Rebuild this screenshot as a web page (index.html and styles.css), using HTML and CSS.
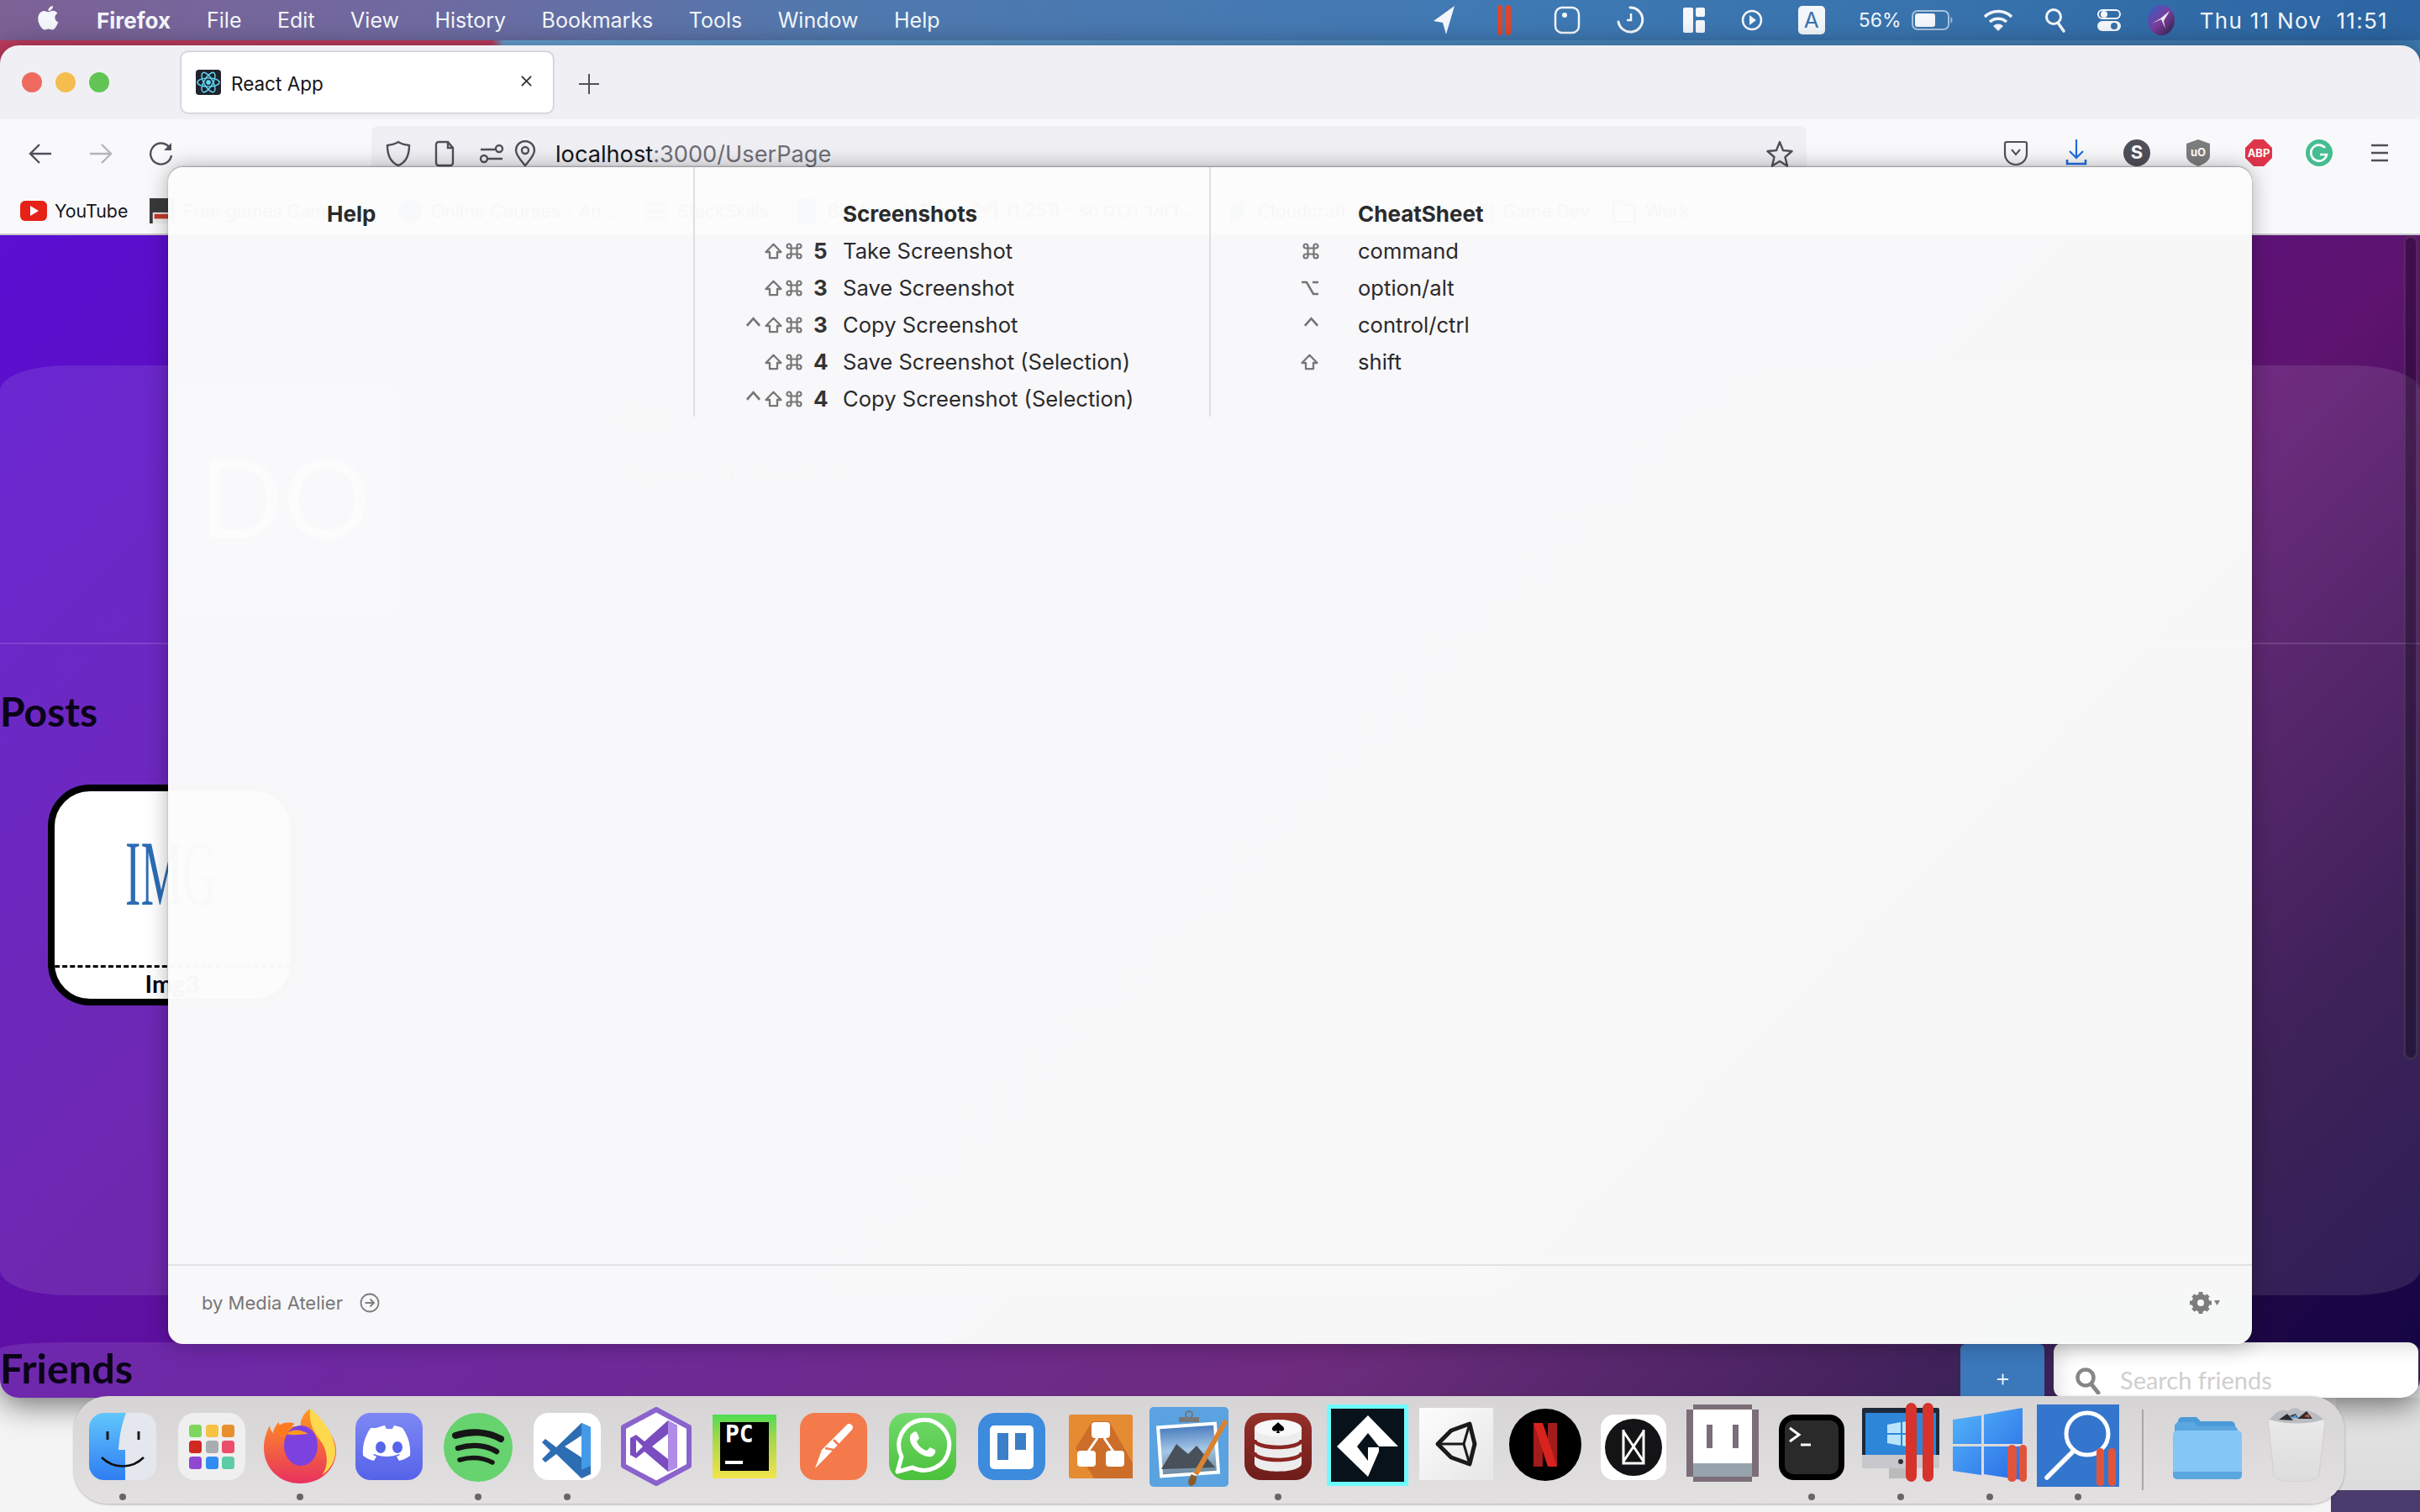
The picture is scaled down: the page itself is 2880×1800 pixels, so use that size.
FILE: index.html
```html
<!DOCTYPE html>
<html lang="en">
<head>
<meta charset="utf-8">
<title>React App</title>
<link rel="stylesheet" href="styles.css">
</head>
<body>
<svg class="defs" width="0" height="0">
  <symbol id="k-shift" viewBox="0 0 22 20"><path d="M11 1.800 20 11h-4.500v7.200h-9V11H2z" fill="none" stroke="#767676" stroke-width="2.300" stroke-linejoin="round"/></symbol>
  <symbol id="k-cmd" viewBox="0 0 20 20"><path d="M6.500 6.500V4A2.500 2.500 0 1 0 4 6.500H16A2.500 2.500 0 1 0 13.500 4V16A2.500 2.500 0 1 0 16 13.500H4A2.500 2.500 0 1 0 6.500 16z" fill="none" stroke="#767676" stroke-width="2.200"/></symbol>
  <symbol id="k-ctrl" viewBox="0 0 20 12"><path d="M2 11 10 2l8 9" fill="none" stroke="#767676" stroke-width="2.800"/></symbol>
  <symbol id="k-opt" viewBox="0 0 22 18"><path d="M1 2h6l8 14h6M14 2h7" fill="none" stroke="#767676" stroke-width="2.600"/></symbol>
</svg>
<header class="menubar">
  <svg class="apple" viewBox="0 0 26 32"><path d="M19 1c.3 3-2.500 6.200-5.600 6 -.4-2.900 2.600-5.800 5.600-6zM13.300 8.300c1.300 0 3-1.500 5.600-1.500 2 0 4.200 1 5.500 3-4.500 2.700-3.700 8.800.9 10.700-1.300 3.300-4 9-7 9-1.500 0-2.400-1-4.400-1-2.100 0-3 1-4.500 1C6 29.500 1.300 22.600 1.300 16.300c0-5.700 3.500-9.300 7.300-9.300 2 0 3.500 1.300 4.700 1.300z"/></svg>
  <nav class="menus">
    <b class="app">Firefox</b><span>File</span><span>Edit</span><span>View</span><span>History</span><span>Bookmarks</span><span>Tools</span><span>Window</span><span>Help</span>
  </nav>
  <div class="status">
    <svg class="st st-loc" viewBox="0 0 30 36"><path d="M28 1 3 19l11 2 4 14z" fill="#f4f7fb"/></svg>
    <svg class="st st-pause" viewBox="0 0 18 36"><rect x="1" width="6" height="36" rx="3" fill="#e2452c"/><rect x="11" width="6" height="36" rx="3" fill="#e2452c"/></svg>
    <svg class="st st-mouse" viewBox="0 0 32 34"><rect x="2" y="2" width="28" height="30" rx="8" fill="none" stroke="#f4f7fb" stroke-width="2.500"/><circle cx="13" cy="11" r="3" fill="#f4f7fb"/></svg>
    <svg class="st st-clock" viewBox="0 0 34 36"><path d="M17 3A14.500 14.500 0 1 1 3 20" fill="none" stroke="#f4f7fb" stroke-width="3" stroke-linecap="round"/><path d="M13 18h5V10" fill="none" stroke="#f4f7fb" stroke-width="2.500"/></svg>
    <svg class="st st-layout" viewBox="0 0 28 32"><rect x="1" y="1" width="12" height="30" rx="2" fill="#f4f7fb"/><rect x="16" y="1" width="11" height="11" rx="2" fill="#f4f7fb"/><rect x="16" y="16" width="11" height="15" rx="2" fill="#f4f7fb"/></svg>
    <svg class="st st-play" viewBox="0 0 26 28"><circle cx="13" cy="14" r="11" fill="none" stroke="#f4f7fb" stroke-width="2.500"/><path d="M10 8l8 6-8 6z" fill="#f4f7fb"/></svg>
    <span class="st st-a">A</span>
    <span class="st st-pct">56%</span>
    <svg class="st st-batt" viewBox="0 0 50 24"><rect x="1" y="1" width="43" height="22" rx="6" fill="none" stroke="#a8c2dc" stroke-width="2"/><rect x="4" y="4" width="24" height="16" rx="3" fill="#f4f7fb"/><path d="M46.500 8a5 5 0 0 1 0 8z" fill="#a8c2dc"/></svg>
    <svg class="st st-wifi" viewBox="0 0 36 26"><path d="M2 9a23 23 0 0 1 32 0M8 15a15 15 0 0 1 20 0" fill="none" stroke="#f4f7fb" stroke-width="3.500"/><path d="M18 26l-6-6a8.500 8.500 0 0 1 12 0z" fill="#f4f7fb"/></svg>
    <svg class="st st-search" viewBox="0 0 26 30"><circle cx="11" cy="11" r="8.500" fill="none" stroke="#f4f7fb" stroke-width="3"/><path d="M16 18l7 10" stroke="#f4f7fb" stroke-width="3.500" stroke-linecap="round"/></svg>
    <svg class="st st-cc" viewBox="0 0 30 28"><rect x="2" y="2" width="26" height="10" rx="5" fill="none" stroke="#f4f7fb" stroke-width="2"/><circle cx="9" cy="7" r="4" fill="#f4f7fb"/><rect x="1" y="15" width="28" height="12" rx="6" fill="#f4f7fb"/><circle cx="21" cy="21" r="4" fill="#3a72ac"/></svg>
    <svg class="st st-siri" viewBox="0 0 32 36"><defs><linearGradient id="siri" x1="0" y1="0" x2="1" y2="1"><stop offset="0" stop-color="#2d63c4"/><stop offset=".5" stop-color="#7b3d9e"/><stop offset="1" stop-color="#2a2340"/></linearGradient></defs><ellipse cx="16" cy="18" rx="16" ry="18" fill="url(#siri)"/><path d="M5 22 15 16l11-9-7 12 2 9-5-11z" fill="#e8eaf2"/></svg>
    <time class="clock">Thu 11 Nov&nbsp; 11:51</time>
  </div>
</header>
<div class="strip"></div>

<main class="window">
  <section class="tabbar">
    <div class="lights"><i class="red"></i><i class="yellow"></i><i class="green"></i></div>
    <div class="tab">
      <svg class="favicon" viewBox="0 0 32 32"><rect width="32" height="32" rx="4" fill="#20232a"/><g fill="none" stroke="#61dafb" stroke-width="1.500"><ellipse cx="16" cy="16" rx="14" ry="5.500"/><ellipse cx="16" cy="16" rx="14" ry="5.500" transform="rotate(60 16 16)"/><ellipse cx="16" cy="16" rx="14" ry="5.500" transform="rotate(120 16 16)"/></g><circle cx="16" cy="16" r="3" fill="#61dafb"/></svg>
      <span class="tab-title">React App</span>
      <svg class="tab-close" viewBox="0 0 16 16"><path d="M2 2l12 12M14 2 2 14" stroke="#2b2a33" stroke-width="1.800"/></svg>
    </div>
    <svg class="newtab" viewBox="0 0 26 26"><path d="M13 1v24M1 13h24" stroke="#50505a" stroke-width="2"/></svg>
  </section>

  <section class="toolbar">
    <svg class="nav" viewBox="0 0 30 30"><path d="M28 15H3M14 4 3 15l11 11" fill="none" stroke="#50505a" stroke-width="2.400"/></svg>
    <svg class="nav" viewBox="0 0 30 30"><path d="M2 15h25M16 4l11 11-11 11" fill="none" stroke="#b4b4bb" stroke-width="2.400"/></svg>
    <svg class="nav" viewBox="0 0 30 30"><path d="M25 8A12.500 12.500 0 1 0 27 17" fill="none" stroke="#50505a" stroke-width="2.400"/><path d="M27 2v9h-9z" fill="#50505a"/></svg>
    <div class="urlbar">
      <svg class="ub ub-shield" viewBox="0 0 30 32"><path d="M15 2c4 2.500 8 3.500 13 4 0 11-3 20-13 24C5 26 2 17 2 6c5-.5 9-1.500 13-4z" fill="none" stroke="#50505a" stroke-width="2.400"/></svg>
      <svg class="ub ub-page" viewBox="0 0 26 32"><path d="M3 5a3 3 0 0 1 3-3h11l6 7v18a3 3 0 0 1-3 3H6a3 3 0 0 1-3-3zM17 2v7h6" fill="none" stroke="#50505a" stroke-width="2.400"/></svg>
      <svg class="ub ub-perm" viewBox="0 0 30 26"><path d="M2 8h17M11 19h17" stroke="#50505a" stroke-width="2.400"/><circle cx="24" cy="7" r="4" fill="none" stroke="#50505a" stroke-width="2.400"/><circle cx="6" cy="19" r="4" fill="none" stroke="#50505a" stroke-width="2.400"/></svg>
      <svg class="ub ub-pin" viewBox="0 0 28 32"><path d="M14 30C9 24 3 18 3 12a11 11 0 0 1 22 0c0 6-6 12-11 18z" fill="none" stroke="#50505a" stroke-width="2.400"/><circle cx="14" cy="12" r="4" fill="none" stroke="#50505a" stroke-width="2.400"/></svg>
      <span class="url">localhost<em>:3000/UserPage</em></span>
      <svg class="ub ub-star" viewBox="0 0 32 32"><path d="M16 2l4 10 10.500 1-8 7 2.500 10.500L16 25l-9 5.500L9.500 20l-8-7L12 12z" fill="none" stroke="#50505a" stroke-width="2.400" stroke-linejoin="round"/></svg>
    </div>
    <div class="addons">
      <svg viewBox="0 0 32 32"><path d="M5 3h22a2 2 0 0 1 2 2v12a13 13 0 0 1-26 0V5a2 2 0 0 1 2-2z" fill="none" stroke="#50505a" stroke-width="2.200"/><path d="M11 12l5 6 5-6" fill="none" stroke="#50505a" stroke-width="2"/></svg>
      <svg viewBox="0 0 32 32"><path d="M16 0v22M8 14l8 8 8-8" fill="none" stroke="#1f6ce0" stroke-width="2.200"/><path d="M5 24v5h22v-5" fill="none" stroke="#1f6ce0" stroke-width="2.600"/></svg>
      <svg viewBox="0 0 32 32"><circle cx="16" cy="16" r="16" fill="#50505c"/><text x="16" y="23" class="ic-s">S</text></svg>
      <svg viewBox="0 0 32 32"><path d="M16 0l14 5v14c0 6-6 10-14 13C8 29 2 25 2 19V5z" fill="#7d7d7d"/><text x="16" y="20" class="ic-ub">uO</text></svg>
      <svg viewBox="0 0 32 32"><path d="M10 0h12l10 10v12L22 32H10L0 22V10z" fill="#e0344a"/><text x="16" y="21" class="ic-abp">ABP</text></svg>
      <svg viewBox="0 0 32 32"><circle cx="16" cy="16" r="16" fill="#45bd91"/><path d="M23 10a9.500 9.500 0 1 0 2 8h-8" fill="none" stroke="#fff" stroke-width="2.600"/></svg>
      <svg viewBox="0 0 32 32"><path d="M6 7h20M6 16h20M6 25h20" stroke="#50505a" stroke-width="2.600"/></svg>
    </div>
  </section>

  <section class="bookmarks">
    <span class="bm bm-yt"><svg viewBox="0 0 32 24"><rect width="32" height="24" rx="6" fill="#e62117"/><path d="M12 6l10 6-10 6z" fill="#fff"/></svg>YouTube</span>
    <span class="bm bm-free"><svg viewBox="0 0 32 32"><rect width="32" height="32" fill="#3a3a3a"/><rect x="4" y="18" width="24" height="14" fill="#eee"/><rect x="6" y="20" width="20" height="6" fill="#c0392b"/></svg>Free games Gam...</span>
    <span class="bm bm-online"><svg viewBox="0 0 30 30"><circle cx="15" cy="15" r="14" fill="#4c6ef5"/></svg>Online Courses - An...</span>
    <span class="bm bm-stack"><svg viewBox="0 0 30 30"><path d="M2 6h26M2 15h26M2 24h26" stroke="#777" stroke-width="5"/></svg>StackSkills</span>
    <span class="bm bm-book"><svg viewBox="0 0 24 32"><rect width="24" height="32" rx="3" fill="#4c6ef5"/></svg>Bookmark Tab</span>
    <span class="bm bm-mail"><svg viewBox="0 0 30 30"><path d="M2 26V4l13 11L28 4v22" fill="none" stroke="#d93025" stroke-width="4"/></svg><bdi dir="ltr">(1,251) - sc דואר נכנס...</bdi></span>
    <span class="bm bm-cloud"><svg viewBox="0 0 20 30"><path d="M2 28V8L18 2v20z" fill="#4aa564"/></svg>Cloudcraft - Dra</span>
    <span class="bm bm-dev"><svg viewBox="0 0 30 30"><path d="M2 4h10l4 4h12v20H2z" fill="none" stroke="#50505a" stroke-width="2"/></svg>Game Dev</span>
    <span class="bm bm-work"><svg viewBox="0 0 30 30"><path d="M2 4h10l4 4h12v20H2z" fill="none" stroke="#50505a" stroke-width="2"/></svg>Work</span>
  </section>

  <section class="page">
    <div class="scroll-thumb"></div>
    <div class="panel">
      <div class="profile">
        <div class="avatar">DO</div>
        <div class="who">
          <h1>dor</h1>
          <p>Number of friends: 0</p>
        </div>
      </div>
      <h2 class="posts-title">Posts</h2>
      <article class="post">
        <div class="post-img"><svg viewBox="0 0 112 76"><text x="2" y="74" textLength="108" lengthAdjust="spacingAndGlyphs" class="img-word">IMG</text></svg></div>
        <div class="post-cap">Img3</div>
      </article>
    </div>
    <div class="friends">
      <h2>Friends</h2>
      <div class="add"><svg viewBox="0 0 16 16"><path d="M8 1v14M1 8h14" stroke="#f0f4fa" stroke-width="2"/></svg></div>
      <label class="find">
        <svg viewBox="0 0 30 32"><circle cx="12" cy="12" r="9.500" fill="none" stroke="#868686" stroke-width="4.500"/><path d="M19 20l8 10" stroke="#868686" stroke-width="5" stroke-linecap="round"/></svg>
        <span>Search friends</span>
      </label>
    </div>
  </section>
</main>

<section class="overlay">
  <div class="sheet">
    <div class="col col-help"><h3>Help</h3></div>
    <div class="col col-shots">
      <h3>Screenshots</h3>
      <div class="row"><kbd><svg class="k k-s"><use href="#k-shift"/></svg><svg class="k k-c"><use href="#k-cmd"/></svg><b>5</b></kbd><span>Take Screenshot</span></div>
      <div class="row"><kbd><svg class="k k-s"><use href="#k-shift"/></svg><svg class="k k-c"><use href="#k-cmd"/></svg><b>3</b></kbd><span>Save Screenshot</span></div>
      <div class="row"><kbd><svg class="k k-t"><use href="#k-ctrl"/></svg><svg class="k k-s"><use href="#k-shift"/></svg><svg class="k k-c"><use href="#k-cmd"/></svg><b>3</b></kbd><span>Copy Screenshot</span></div>
      <div class="row"><kbd><svg class="k k-s"><use href="#k-shift"/></svg><svg class="k k-c"><use href="#k-cmd"/></svg><b>4</b></kbd><span>Save Screenshot (Selection)</span></div>
      <div class="row"><kbd><svg class="k k-t"><use href="#k-ctrl"/></svg><svg class="k k-s"><use href="#k-shift"/></svg><svg class="k k-c"><use href="#k-cmd"/></svg><b>4</b></kbd><span>Copy Screenshot (Selection)</span></div>
    </div>
    <div class="col col-cheat">
      <h3>CheatSheet</h3>
      <div class="row"><kbd><svg class="k k-c"><use href="#k-cmd"/></svg></kbd><span>command</span></div>
      <div class="row"><kbd><svg class="k k-o"><use href="#k-opt"/></svg></kbd><span>option/alt</span></div>
      <div class="row"><kbd><svg class="k k-t"><use href="#k-ctrl"/></svg></kbd><span>control/ctrl</span></div>
      <div class="row"><kbd><svg class="k k-s"><use href="#k-shift"/></svg></kbd><span>shift</span></div>
    </div>
  </div>
  <footer class="sheet-foot">
    <span>by Media Atelier</span>
    <svg class="go" viewBox="0 0 24 24"><circle cx="12" cy="12" r="10.500" fill="none" stroke="#7d7d7d" stroke-width="1.800"/><path d="M6.500 12h10M12.500 7.500l4.500 4.500-4.500 4.500" fill="none" stroke="#7d7d7d" stroke-width="1.800"/></svg>
    <svg class="gear" viewBox="0 0 36 28"><g fill="#7d7d7d"><circle cx="13" cy="14" r="8" fill="none" stroke="#7d7d7d" stroke-width="5"/><g stroke="#7d7d7d" stroke-width="5"><path d="M13 1v26M0 14h26M4 5l18 18M22 5 4 23"/></g><circle cx="13" cy="14" r="4" fill="#f8f8fa"/><path d="M29 11h7l-3.500 6z"/></g></svg>
  </footer>
</section>

<nav class="dock">
  <div class="slot run"><svg class="ic80" viewBox="0 0 80 80"><defs><linearGradient id="fL" x1="0" y1="0" x2="0" y2="1"><stop offset="0" stop-color="#62c6fb"/><stop offset="1" stop-color="#2f7df2"/></linearGradient></defs><rect width="80" height="80" rx="18" fill="#e4e7ee"/><path d="M18 0h26c-5 13-8 27-9 44h8v36H18A18 18 0 0 1 0 62V18A18 18 0 0 1 18 0z" fill="url(#fL)"/><path d="M22 22v10M59 22v10" stroke="#1a1a1a" stroke-width="3"/><path d="M15 53c14 14 36 14 50 0" fill="none" stroke="#111" stroke-width="2.500"/></svg></div>
  <div class="slot"><svg class="ic80" viewBox="0 0 80 80"><rect width="80" height="80" rx="20" fill="#f0eff0"/><g><rect x="13" y="14" width="15" height="15" rx="3.500" fill="#7fd65d"/><rect x="33" y="14" width="15" height="15" rx="3.500" fill="#f6c244"/><rect x="52" y="14" width="15" height="15" rx="3.500" fill="#e88f2e"/><rect x="13" y="33" width="15" height="15" rx="3.500" fill="#d1281f"/><rect x="33" y="33" width="15" height="15" rx="3.500" fill="#a9adb0"/><rect x="52" y="33" width="15" height="15" rx="3.500" fill="#ea4e69"/><rect x="13" y="52" width="15" height="15" rx="3.500" fill="#9048d0"/><rect x="33" y="52" width="15" height="15" rx="3.500" fill="#2f8df2"/><rect x="52" y="52" width="15" height="15" rx="3.500" fill="#5dcba5"/></g></svg></div>
  <div class="slot run"><svg class="ic-fox" viewBox="0 0 86 90"><defs><linearGradient id="fx" x1="0" y1="0" x2="0" y2="1"><stop offset="0" stop-color="#ff9a1f"/><stop offset="1" stop-color="#e8315f"/></linearGradient></defs><path d="M43 89C18 89 0 70 0 47c0-10 3-20 7-27 0 4 2 7 4 9 1-6 5-12 7-13 0 4 2 8 5 9C30 18 38 22 44 22 42 15 48 4 55 0c0 10 9 15 14 24 3-1 6-1 7 0 5 8 10 16 10 26 0 22-18 39-43 39z" fill="url(#fx)"/><path d="M55 0c12 9 28 28 30 48 1 12-5 24-16 31 8-9 8-27-1-40C63 31 53 22 55 0z" fill="#ffd94d"/><path d="M11 27c5-8 15-13 26-9-6 3-8 7-9 9 6 0 12 2 16 8-5 3-13 0-15 2z" fill="#ff7a1f"/><ellipse cx="44" cy="44" rx="20" ry="24" fill="#7c42e0"/><path d="M27 30c6-6 16-6 26 0-8 0-17 3-26 0z" fill="#ff9a1f"/></svg></div>
  <div class="slot"><svg class="ic80" viewBox="0 0 80 80"><defs><linearGradient id="dc" x1="0" y1="0" x2="0" y2="1"><stop offset="0" stop-color="#7e88f5"/><stop offset="1" stop-color="#5563e8"/></linearGradient></defs><rect width="80" height="80" rx="18" fill="url(#dc)"/><path d="M25 18c5-2 9-3 10-3l2 4h7l2-4c3 .5 7 1.500 10 3 7 10 10 21 9 33-4 3-8 5-13 6l-3-5 4-2-1-1c-10 4-20 4-30 0l-1 1 4 2-3 5c-5-1-9-3-13-6-1-12 2-23 9-33z" fill="#fff"/><ellipse cx="30" cy="41" rx="6" ry="7" fill="#5865ea"/><ellipse cx="50" cy="41" rx="6" ry="7" fill="#5865ea"/></svg></div>
  <div class="slot run"><svg class="ic82" viewBox="0 0 82 82"><circle cx="41" cy="41" r="41" fill="#66d36e"/><g fill="none" stroke="#161616" stroke-linecap="round"><path d="M14 27c18-6 38-5 54 4" stroke-width="8"/><path d="M17 42c16-5 33-4 46 4" stroke-width="6.500"/><path d="M19 56c14-4 27-3 39 3" stroke-width="5.500"/></g></svg></div>
  <div class="slot run"><svg class="ic80" viewBox="0 0 80 80"><rect width="80" height="80" rx="18" fill="#fff"/><path d="M57 12 27 41 14 31l-4 4 10 10-10 10 4 4 13-10 30 29 11-5V17z" fill="#2c6db3"/><path d="M57 12l11 5v46l-11 5z" fill="#429ae8"/><path d="M57 27v26L37 40z" fill="#fff"/></svg></div>
  <div class="slot"><svg class="ic-vs" viewBox="0 0 86 94"><path d="M43 3 82 24v46L43 91 4 70V24z" fill="#fff" stroke="#8a63cc" stroke-width="6" stroke-linejoin="round"/><path d="M57 16l11 6v50l-11 5-28-24-10 8-7-4V37l7-4 10 8z" fill="#7a4cc0"/><path d="M57 16l11 6v50l-11 5z" fill="#b08be8"/><path d="M57 32v30L38 47z" fill="#fff"/><path d="M19 39v16l8-8z" fill="#fff"/></svg></div>
  <div class="slot"><svg class="ic-pc" viewBox="0 0 76 76"><defs><linearGradient id="pc" x1="0" y1="0" x2="0" y2="1"><stop offset="0" stop-color="#4fdc52"/><stop offset=".4" stop-color="#a9d74a"/><stop offset="1" stop-color="#f3e44b"/></linearGradient></defs><rect width="76" height="76" fill="url(#pc)"/><rect x="9" y="9" width="58" height="58" fill="#000"/><text x="15" y="33" class="ic-pc-txt">PC</text><rect x="15" y="55" width="21" height="4" fill="#fff"/></svg></div>
  <div class="slot"><svg class="ic80" viewBox="0 0 80 80"><rect width="80" height="80" rx="18" fill="#f47a4b"/><path d="M18 66 26 44 56 14c4-3 9 2 6 6L32 52z" fill="#fff"/><path d="M30 42l20 4M40 32l8 8" stroke="#f47a4b" stroke-width="2.500"/></svg></div>
  <div class="slot"><svg class="ic80" viewBox="0 0 80 80"><defs><linearGradient id="wa" x1="0" y1="0" x2="0" y2="1"><stop offset="0" stop-color="#72da6c"/><stop offset="1" stop-color="#4bc13b"/></linearGradient></defs><rect width="80" height="80" rx="20" fill="url(#wa)"/><path d="M10 70l5-18A30 30 0 1 1 28 65z" fill="none" stroke="#fff" stroke-width="5" stroke-linejoin="round"/><path d="M28 24c3-3 5-2 6 1l2 5-3 4c2 5 6 9 12 11l4-4 6 3c1 3-1 7-5 8-10 2-26-12-25-22 0-3 1-5 3-6z" fill="#fff"/></svg></div>
  <div class="slot"><svg class="ic80" viewBox="0 0 80 80"><rect width="80" height="80" rx="20" fill="#3c8bdc"/><rect x="14" y="15" width="52" height="52" rx="5" fill="#fff"/><rect x="23" y="24" width="13" height="32" fill="#3a7fc8"/><rect x="44" y="24" width="13" height="20" fill="#3a7fc8"/></svg></div>
  <div class="slot"><svg class="ic-dr" viewBox="0 0 76 76"><rect width="76" height="76" rx="3" fill="#e58c33"/><path d="M28 8h20l28 50v18H30L8 40z" fill="#cc6e2a"/><rect x="27" y="9" width="22" height="19" rx="4" fill="#fff"/><rect x="10" y="43" width="22" height="19" rx="4" fill="#fff"/><rect x="44" y="43" width="22" height="19" rx="4" fill="#fff"/><path d="M34 28 23 44M42 28 53 44" stroke="#fff" stroke-width="3"/></svg></div>
  <div class="slot"><svg class="ic-pv" viewBox="0 0 94 95"><defs><linearGradient id="pv" x1="0" y1="0" x2="0" y2="1"><stop offset="0" stop-color="#4d7fbf"/><stop offset=".5" stop-color="#a6c7e6"/><stop offset="1" stop-color="#6e8aa0"/></linearGradient></defs><rect width="94" height="95" rx="5" fill="#5aa2e0"/><rect x="10" y="20" width="72" height="62" fill="#fff" transform="rotate(-4 46 50)"/><rect x="14" y="24" width="64" height="54" fill="url(#pv)" transform="rotate(-4 46 50)"/><path d="M14 74 32 44l14 12 10-10 22 26z" fill="#48505a"/><rect x="35" y="12" width="24" height="6" fill="#777"/><circle cx="47" cy="9" r="4" fill="none" stroke="#777" stroke-width="2"/><path d="M91 16 55 80" stroke="#d98330" stroke-width="6"/><path d="M49 94c-4-2-4-6 1-14l6 3c0 7-2 10-7 11z" fill="#8a5c2c"/></svg></div>
  <div class="slot run"><svg class="ic80" viewBox="0 0 80 80"><defs><linearGradient id="sq" x1="0" y1="0" x2="0" y2="1"><stop offset="0" stop-color="#96302a"/><stop offset="1" stop-color="#6e1d1a"/></linearGradient></defs><rect width="80" height="80" rx="20" fill="url(#sq)"/><path d="M12 18v42c0 13 56 13 56 0V18z" fill="#ececec"/><ellipse cx="40" cy="18" rx="28" ry="10" fill="#f8f8f8"/><path d="M12 32c0 12 56 12 56 0M12 47c0 12 56 12 56 0" fill="none" stroke="#8a2622" stroke-width="4.500"/><path d="M40 11c3 4 8 5 7 9-1 2-4 2-6 1l1 3h-4l1-3c-2 1-5 1-6-1-1-4 4-5 7-9z" fill="#000"/></svg></div>
  <div class="slot"><svg class="ic-gm" viewBox="0 0 97 97"><rect width="97" height="97" fill="#6efbfd"/><rect x="5" y="5" width="87" height="87" fill="#07121a"/><path d="M49 13 85 50H62L49 34 36 50l13 17v-16h13v5L49 86 12 50z" fill="#fff"/></svg></div>
  <div class="slot"><svg class="ic-un" viewBox="0 0 88 86"><defs><linearGradient id="un" x1="0" y1="0" x2="1" y2="1"><stop offset="0" stop-color="#fdfdfd"/><stop offset="1" stop-color="#e6e6e6"/></linearGradient></defs><rect width="88" height="86" fill="url(#un)"/><path d="M22 43 38 27 60 19 66 43 60 67 38 59z" fill="none" stroke="#1b1b1b" stroke-width="5" stroke-linejoin="round"/><path d="M22 43H53L60 19M53 43 60 67" fill="none" stroke="#1b1b1b" stroke-width="3"/></svg></div>
  <div class="slot"><svg class="ic86" viewBox="0 0 86 86"><circle cx="43" cy="43" r="43" fill="#000"/><path d="M29 17h11v52H29zM46 17h11v52H46z" fill="#a11c1a"/><path d="M29 17h11l17 52H46z" fill="#d8231f"/></svg></div>
  <div class="slot"><svg class="ic78" viewBox="0 0 78 78"><rect width="78" height="78" rx="16" fill="#fff"/><circle cx="39" cy="39" r="34" fill="#141417"/><path d="M27 18v40h24V18M27 20 51 56M51 20 27 56" fill="none" stroke="#fff" stroke-width="3"/></svg></div>
  <div class="slot"><svg class="ic-px" viewBox="0 0 86 92"><path d="M8 0h70v6h8v80h-8v6H8v-6H0V6h8z" fill="#7b6e78"/><path d="M8 6h70v64H8z" fill="#fff"/><rect x="8" y="70" width="70" height="16" fill="#95a3ad"/><rect x="24" y="24" width="7" height="28" fill="#7b6e78"/><rect x="55" y="24" width="7" height="28" fill="#7b6e78"/></svg></div>
  <div class="slot run"><svg class="ic78" viewBox="0 0 78 78"><rect width="78" height="78" rx="18" fill="#000"/><rect x="7" y="7" width="64" height="64" rx="10" fill="#2a2a2a"/><path d="M13 16l11 8-11 8" fill="none" stroke="#fff" stroke-width="3"/><path d="M26 36h12" stroke="#fff" stroke-width="3"/></svg></div>
  <div class="slot run"><svg class="ic-mon" viewBox="0 0 92 94"><rect x="0" y="6" width="92" height="62" rx="2" fill="#1d2a3a"/><rect x="4" y="12" width="84" height="50" fill="#2e86d8"/><path d="M30 26l16-3v13H30zM48 23l14-3v16H48zM30 38h16v13l-16-3zM48 38h14v16l-14-3z" fill="#b8e4fb"/><rect y="62" width="92" height="16" fill="#c8c8cc"/><circle cx="46" cy="70" r="3" fill="#333"/><rect x="32" y="78" width="28" height="12" fill="#bbb"/><rect x="52" width="13" height="94" rx="6.500" fill="#d5332b"/><rect x="72" width="13" height="94" rx="6.500" fill="#d5332b"/></svg></div>
  <div class="slot run"><svg class="ic-win" viewBox="0 0 88 90"><defs><linearGradient id="wn" x1="0" y1="0" x2="1" y2="1"><stop offset="0" stop-color="#53b6f9"/><stop offset="1" stop-color="#2a6ae6"/></linearGradient></defs><path d="M0 16l34-5v34H0zM37 10l46-8v43H37zM0 48h34v34l-34-5zM37 48h46v40l-46-7z" fill="url(#wn)"/><rect x="65" y="46" width="11" height="44" rx="5.500" fill="#e2543a"/><rect x="79" y="46" width="9" height="44" rx="4.500" fill="#e2543a"/></svg></div>
  <div class="slot run"><svg class="ic-fd" viewBox="0 0 98 98"><rect width="98" height="98" fill="#3476ce"/><circle cx="60" cy="35" r="25" fill="none" stroke="#fff" stroke-width="5"/><path d="M44 55 12 87" stroke="#fff" stroke-width="5.500" stroke-linecap="round"/><rect x="71" y="52" width="9" height="45" rx="4.500" fill="#e2543a"/><rect x="85" y="52" width="9" height="45" rx="4.500" fill="#e2543a"/></svg></div>
  <div class="dock-sep"></div>
  <div class="slot"><svg class="ic-fo" viewBox="0 0 82 82"><path d="M6 12a5 5 0 0 1 5-5h17l5 5h36a5 5 0 0 1 5 5v30H6z" fill="#4b9bd8"/><path d="M2 18a5 5 0 0 1 5-5h18l5 5h42a5 5 0 0 1 5 5v30H2z" fill="#5aa6df"/><path d="M0 28a5 5 0 0 1 5-5h72a5 5 0 0 1 5 5v48a5 5 0 0 1-5 5H5a5 5 0 0 1-5-5z" fill="#84c6f5"/><path d="M0 72h82v4a5 5 0 0 1-5 5H5a5 5 0 0 1-5-5z" fill="#5aa6df"/></svg></div>
  <div class="slot"><svg class="ic-tr" viewBox="0 0 70 90"><defs><linearGradient id="tr" x1="0" y1="0" x2="0" y2="1"><stop offset="0" stop-color="#e9e9e9"/><stop offset="1" stop-color="#dcdcdc"/></linearGradient></defs><path d="M1 16h68l-7 66c-1 5-10 8-27 8S9 87 8 82z" fill="url(#tr)" stroke="#cfcfcf"/><path d="M3 16c6-8 14-14 22-10 4-5 12-5 16 0 9-3 20 3 26 10-20 6-44 6-64 0z" fill="#b9bcc0"/><path d="M14 16l10-7 7 8zM36 15l11-9 7 9zM26 12l8-3 3 5z" fill="#2b2b30"/><path d="M28 14l6-4 2 4z" fill="#4b9bd8"/><path d="M44 12l5-3 2 5z" fill="#c0543a"/></svg></div>
</nav>
</body>
</html>
```

FILE: styles.css
```css
* { box-sizing: border-box; }
html, body { margin: 0; padding: 0; }
body {
  position: relative;
  width: 2880px;
  height: 1800px;
  overflow: hidden;
  font-family: Inter, "Liberation Sans", sans-serif;
  background:
    linear-gradient(#4a3c6c, #4a3c6c) 2774px 1774px / 106px 26px no-repeat,
    linear-gradient(#e4e4e4, #dcdcdc) 2780px 1664px / 100px 110px no-repeat,
    #f4f4f4;
}
h1, h2, h3, p { margin: 0; }
svg { display: block; flex: none; }
.defs { position: absolute; }

/* menu bar */
.menubar {
  height: 48px;
  display: flex;
  align-items: center;
  padding-left: 44px;
  color: #f4f7fb;
  font-size: 25px;
  background: linear-gradient(90deg, #7c6195 0, #6f6aa0 500px, #5079ae 1000px, #3f79b4 1800px, #3873ad 2300px, #2c65a2 2880px);
}
.apple { width: 26px; height: 32px; fill: #f4f7fb; margin-top: -4px; }
.menus { display: flex; align-items: center; margin-left: 45px; }
.menus span, .menus b { margin-right: 42.500px; white-space: nowrap; }
.menus .app { font-weight: 700; font-size: 26px; margin-right: 43px; }
.status { margin-left: auto; display: flex; align-items: center; padding-right: 38px; }
.st-loc { width: 30px; height: 36px; }
.st-pause { width: 18px; height: 36px; margin-left: 48px; }
.st-mouse { width: 32px; height: 34px; margin-left: 50px; }
.st-clock { width: 34px; height: 36px; margin-left: 42px; }
.st-layout { width: 28px; height: 32px; margin-left: 45px; }
.st-play { width: 26px; height: 28px; margin-left: 42px; }
.st-a { width: 32px; height: 34px; margin-left: 42px; border-radius: 5px; background: #f4f7fb; color: #3a72ac; font-size: 26px; text-align: center; line-height: 34px; }
.st-pct { margin-left: 40px; font-size: 23px; }
.st-batt { width: 50px; height: 24px; margin-left: 12px; }
.st-wifi { width: 36px; height: 26px; margin-left: 35px; }
.st-search { width: 26px; height: 30px; margin-left: 37px; }
.st-cc { width: 30px; height: 28px; margin-left: 36px; }
.st-siri { width: 32px; height: 36px; margin-left: 31px; }
.clock { margin-left: 30px; white-space: nowrap; font-size: 26px; letter-spacing: 1.300px; }

.strip {
  height: 28px;
  margin-bottom: -22px;
  background: linear-gradient(90deg, #c23b5e 0, #c23b5e 585px, #6aa6d8 600px, #4d8cc4 1800px, #3f7cb4 2880px);
}

/* browser window */
.window {
  position: relative;
  height: 1610px;
  display: flex;
  flex-direction: column;
  border-radius: 22px;
  overflow: hidden;
  background: #f0f0f4;
  box-shadow: 0 8px 36px rgba(0, 0, 0, .55);
}
.tabbar { height: 88px; flex: none; display: flex; align-items: flex-start; position: relative; }
.lights { display: flex; gap: 16px; margin: 32px 0 0 26px; width: 190px; }
.lights i { width: 24px; height: 24px; border-radius: 50%; }
.lights .red { background: #ee6a5f; }
.lights .yellow { background: #f5bd4f; }
.lights .green { background: #61c454; }
.tab {
  width: 442px;
  height: 72px;
  margin-top: 8px;
  display: flex;
  align-items: center;
  padding: 0 24px 0 17px;
  background: #fff;
  border-radius: 8px;
  box-shadow: 0 0 3px rgba(0, 0, 0, .4);
  font-size: 22.500px;
  color: #15141a;
}
.favicon { width: 30px; height: 32px; }
.tab-title { margin-left: 12px; flex: 1; padding-top: 2px; }
.tab-close { width: 15px; height: 15px; margin-top: -4px; }
.newtab { width: 26px; height: 26px; margin: 33px 0 0 30px; }

.toolbar { height: 83px; flex: none; display: flex; align-items: flex-start; background: #f9f9fb; padding: 26px 0 0 33px; position: relative; }
.nav { width: 30px; height: 30px; margin-right: 42px; }
.urlbar {
  position: absolute;
  left: 442px;
  top: 8px;
  width: 1708px;
  height: 66px;
  display: flex;
  align-items: center;
  background: #f0f0f4;
  border-radius: 8px;
}
.ub-shield { width: 30px; height: 32px; margin-left: 17px; }
.ub-page { width: 26px; height: 32px; margin-left: 27px; }
.ub-perm { width: 30px; height: 26px; margin-left: 28px; }
.ub-pin { width: 28px; height: 32px; margin-left: 11px; }
.url { margin-left: 22px; font-size: 27.200px; color: #15141a; }
.url em { font-style: normal; color: #6f6f78; }
.ub-star { width: 32px; height: 32px; margin-left: auto; margin-right: 16px; }
.addons { position: absolute; left: 2363px; top: 24px; display: flex; }
.addons svg { width: 32px; height: 32px; margin: 0 20.100px; }
.ic-s { font: 700 22px Inter, sans-serif; fill: #fff; text-anchor: middle; }
.ic-ub { font: 700 13px Inter, sans-serif; fill: #fff; text-anchor: middle; }
.ic-abp { font: 700 13px Inter, sans-serif; fill: #fff; text-anchor: middle; }

.bookmarks { height: 55px; flex: none; display: flex; align-items: center; background: #f9f9fb; border-bottom: 2px solid #c8c8cc; font-size: 21.300px; color: #15141a; padding-bottom: 2px; }
.bm { display: flex; align-items: center; gap: 9px; white-space: nowrap; overflow: hidden; }
.bm svg { width: 32px; height: 30px; }
.bm-yt { margin-left: 24px; width: 153px; }
.bm-free { width: 295px; }
.bm-online { width: 293px; }
.bm-stack { width: 179px; }
.bm-book { width: 212px; }
.bm-mail { width: 300px; }
.bm-cloud { width: 291px; }
.bm-dev { width: 170px; }
.bm-work { width: 100px; }

/* page */
.page {
  position: relative;
  flex: 1;
  min-height: 0;
  display: flex;
  flex-direction: column;
  padding-top: 155px;
  font-family: Lato, "Liberation Sans", sans-serif;
  color: #0b0418;
  background: linear-gradient(135deg, #5a0fd2 0, #5e10a5 32%, #5e1470 68%, #270945 87%, #140546 100%);
}
.scroll-thumb {
  position: absolute;
  right: 2px;
  top: 0;
  width: 18px;
  height: 982px;
  border-radius: 9px;
  background: rgba(0, 0, 0, .3);
  border: 3px solid rgba(255, 255, 255, .1);
}
.panel {
  height: 1107px;
  flex: none;
  background: rgba(255, 255, 255, .1);
  border-radius: 80px / 30px;
}
.profile {
  height: 332px;
  display: flex;
  padding: 26px 0 0 207px;
  border-bottom: 2px solid rgba(255, 255, 255, .13);
}
.avatar {
  width: 265px;
  height: 267px;
  display: flex;
  align-items: center;
  justify-content: center;
  padding-bottom: 8px;
  background: rgba(255, 255, 255, .18);
  color: #fff;
  font-size: 130px;
}
.who { margin-left: 263px; padding-top: 0; }
.who h1 { font-size: 48px; font-weight: 700; line-height: 60px; }
.who p { margin-top: 24px; font-size: 30px; }
.posts-title { margin-top: 50px; font-size: 48px; font-weight: 700; line-height: 60px; }
.post {
  width: 296px;
  height: 263px;
  margin: 57px 0 0 57px;
  display: flex;
  flex-direction: column;
  background: #fff;
  border: 8px solid #000;
  border-radius: 50px;
  overflow: hidden;
}
.post-img { flex: 1; display: flex; align-items: center; justify-content: center; border-bottom: 3px dashed #000; padding: 0 4px 10px 0; }
.post-img svg { width: 112px; height: 76px; overflow: visible; }
.img-word { font: 110px "Liberation Serif", serif; fill: #2d6cb5; }
.post-cap { height: 37px; text-align: center; font-size: 29px; font-weight: 700; line-height: 37px; }
.friends {
  height: 66px;
  flex: none;
  margin-top: 56px;
  display: flex;
  background: rgba(255, 255, 255, .1);
  border-radius: 80px 80px 0 0 / 8px 8px 0 0;
  position: relative;
}
.friends h2 { flex: 1; font-size: 48.500px; font-weight: 700; line-height: 60px; }
.add { width: 100px; margin: 2px 11px 0 0; background: #3b78ba; border-radius: 6px 6px 0 0; display: flex; justify-content: center; padding-top: 34px; }
.add svg { width: 15px; height: 16px; }
.find {
  width: 434px;
  margin-right: 2px;
  display: flex;
  align-items: flex-start;
  padding: 30px 0 0 26px;
  background: #fff;
  border-radius: 12px;
  box-shadow: inset 14px 14px 22px -8px rgba(0, 0, 0, .13);
}
.find svg { width: 30px; height: 32px; }
.find span { margin: -3px 0 0 23px; font-size: 29px; color: #cfcfcf; white-space: nowrap; }

/* CheatSheet overlay */
.overlay {
  position: absolute;
  left: 200px;
  top: 199px;
  width: 2480px;
  height: 1401px;
  display: flex;
  flex-direction: column;
  background: rgba(251, 252, 251, .98);
  border-radius: 18px;
  box-shadow: 0 0 26px rgba(0, 0, 0, .3), 0 -1px 2px rgba(0, 0, 0, .3);
  color: #2a2a2c;
  font-size: 25.600px;
}
.sheet { flex: 1; display: grid; grid-template-columns: 627px 614px 1fr; align-items: start; }
.col { height: 297px; padding-top: 34px; border-right: 2px solid #dfdfe2; }
.col-cheat { border-right: 0; }
h3 { font-size: 26px; font-weight: 700; line-height: 44px; }
.col-help h3 { padding-left: 189px; }
.row { display: flex; height: 44px; line-height: 44px; white-space: nowrap; }
.col-shots h3 { padding-left: 176px; }
.col-cheat h3 { padding-left: 175px; }
kbd { display: flex; align-items: center; justify-content: flex-end; flex: none; font-family: Inter, sans-serif; }
kbd b { width: 15px; margin-left: 13px; font-size: 26px; font-weight: 700; color: #333; text-align: center; }
.k { display: block; }
.k-s { width: 23px; height: 20px; margin-left: 3px; }
.k-c { width: 20px; height: 20px; margin-left: 3px; }
.k-t { width: 19px; height: 12px; margin-bottom: 8px; }
.k-o { width: 22px; height: 18px; }
.col-shots kbd { width: 156px; }
.col-shots .row span { margin-left: 20px; }
.col-cheat kbd { width: 175px; padding-right: 46px; }
.col-cheat kbd .k { margin-left: 0; }
.sheet-foot {
  height: 95px;
  flex: none;
  display: flex;
  align-items: center;
  padding: 0 36px 5px 40px;
  border-top: 2px solid #e2e2e5;
  font-size: 22px;
  color: #777;
}
.go { width: 24px; height: 24px; margin-left: 20px; }
.gear { width: 36px; height: 28px; margin-left: auto; margin-right: 2px; }

/* dock */
.dock {
  position: absolute;
  left: 88px;
  top: 1662px;
  width: 2702px;
  height: 128px;
  display: flex;
  padding-left: 5px;
  border-radius: 40px;
  background: linear-gradient(#d7d4d6, #e3e0e2);
  box-shadow: 0 1px 3px rgba(0, 0, 0, .3);
}
.slot { position: relative; width: 105.800px; height: 128px; flex: none; display: flex; align-items: flex-start; justify-content: center; padding-top: 20px; }
.slot.run::after { content: ""; position: absolute; left: 50%; top: 116px; width: 8px; height: 8px; margin-left: -4px; border-radius: 50%; background: #666; }
.ic80 { width: 80px; height: 80px; }
.ic82 { width: 82px; height: 82px; }
.ic86 { width: 86px; height: 86px; margin-top: -5px; }
.ic78 { width: 78px; height: 78px; margin-top: 2px; }
.ic-fox { width: 86px; height: 90px; margin-top: -5px; }
.ic-vs { width: 86px; height: 94px; margin-top: -7px; }
.ic-pc { width: 76px; height: 76px; margin-top: 2px; }
.ic-pc-txt { font: 700 28px "DejaVu Sans Mono", monospace; fill: #fff; }
.ic-dr { width: 76px; height: 76px; margin-top: 2px; }
.ic-pv { width: 94px; height: 95px; margin-top: -7px; }
.ic-gm { width: 97px; height: 97px; margin-top: -10px; }
.ic-un { width: 88px; height: 86px; margin-top: -6px; }
.ic-px { width: 86px; height: 92px; margin-top: -10px; }
.ic-mon { width: 92px; height: 94px; margin-top: -12px; }
.ic-win { width: 88px; height: 90px; margin-top: -8px; }
.ic-fd { width: 98px; height: 98px; margin-top: -10px; }
.ic-fo { width: 82px; height: 82px; margin-top: -2px; }
.ic-tr { width: 70px; height: 90px; margin-top: -8px; }
.dock-sep { width: 2px; height: 96px; margin: 16px 23px 0 23px; background: #a8a6a8; flex: none; }
```
